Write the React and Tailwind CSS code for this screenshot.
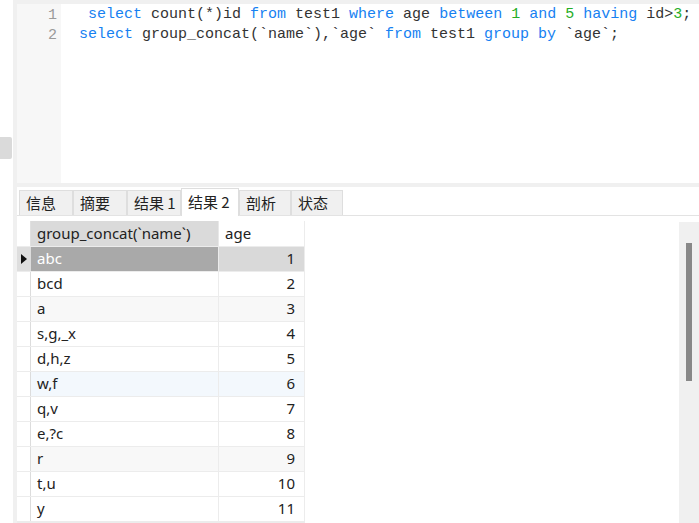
import React from 'react';

const KW = 'text-[#1681f2]';
const NUM = 'text-[#26ad26]';

const line1 = [
  [' ', ''], ['select', KW], [' count(*)id ', ''], ['from', KW], [' test1 ', ''], ['where', KW],
  [' age ', ''], ['between', KW], [' ', ''], ['1', NUM], [' ', ''], ['and', KW], [' ', ''],
  ['5', NUM], [' ', ''], ['having', KW], [' id>', ''], ['3', NUM], [';', ''],
];

const line2 = [
  ['select', KW], [' group_concat(`name`),`age` ', ''], ['from', KW], [' test1 ', ''],
  ['group by', KW], [' `age`;', ''],
];

const tabs = [
  { label: '信息', w: 'w-[54px]' },
  { label: '摘要', w: 'w-[54px]' },
  { label: '结果 1', w: 'w-[54px]' },
  { label: '结果 2', w: 'w-[58px]', active: true },
  { label: '剖析', w: 'w-[52px]' },
  { label: '状态', w: 'w-[52px]' },
];

const rows = [
  { name: 'abc', age: 1 },
  { name: 'bcd', age: 2 },
  { name: 'a', age: 3, bg: 'bg-[#f8f8f8]' },
  { name: 's,g,_x', age: 4 },
  { name: 'd,h,z', age: 5 },
  { name: 'w,f', age: 6, bg: 'bg-[#f3f8fd]' },
  { name: 'q,v', age: 7 },
  { name: 'e,?c', age: 8 },
  { name: 'r', age: 9, bg: 'bg-[#f8f8f8]' },
  { name: 't,u', age: 10 },
  { name: 'y', age: 11 },
];

const CodeLine = ({ parts }) => (
  <div className="h-[20px] leading-[20px] whitespace-pre">
    {parts.map(([t, c], i) => (
      <span key={i} className={c}>{t}</span>
    ))}
  </div>
);

export default function App() {
  return (
    <div className="w-[699px] h-[523px] flex overflow-hidden bg-white text-[#222]">
      {/* left strip */}
      <div className="w-[13px] shrink-0 bg-white">
        <div className="mt-[137px] h-[22px] w-[12px] bg-[#dadada] rounded-r-[2px]"></div>
      </div>
      <div className="w-[4px] shrink-0 bg-[#f0f0f0]"></div>

      <div className="flex-1 flex flex-col min-w-0">
        <div className="h-[4px] bg-[#f0f0f0]"></div>

        {/* editor */}
        <div className="h-[179px] flex pt-[1px] font-['Liberation_Mono',monospace] text-[15px]">
          <div className="w-[44px] -mt-[1px] pt-[1px] bg-[#f7f7f7] text-right pr-[4px] text-[#9a9a9a]">
            <div className="h-[20px] leading-[21px]">1</div>
            <div className="h-[20px] leading-[21px]">2</div>
          </div>
          <div className="flex-1 pl-[18px] text-[#333]">
            <CodeLine parts={line1} />
            <CodeLine parts={line2} />
          </div>
        </div>

        <div className="h-[4px] bg-[#f0f0f0]"></div>

        {/* tabs */}
        <div className="h-[29px] flex items-end pl-[2px] border-b border-[#e3e3e3] font-['Noto_Sans_CJK_SC','Noto_Sans',sans-serif] text-[15px] text-[#222]">
          {tabs.map((t) => (
            <div
              key={t.label}
              className={`${t.w} flex items-center pl-[6px] border border-b-0 border-[#dedede] ${
                t.active ? 'h-[28px] bg-white -mb-px' : 'h-[25px] bg-[#f0f0f0]'
              }`}
            >
              {t.label}
            </div>
          ))}
        </div>

        {/* grid */}
        <div className="flex-1 flex min-h-0">
          <div className="flex-1 pt-[5px] font-['Noto_Sans',sans-serif] text-[15px]">
            <div className="w-[288px]">
              <div className="flex h-[25px]">
                <div className="w-[14px] border-r border-[#e0e0e0]"></div>
                <div className="w-[188px] bg-[#dadada] pl-[6px] leading-[25px] border-r border-[#e8e8e8]">
                  group_concat(`name`)
                </div>
                <div className="w-[86px] bg-white pl-[6px] leading-[25px] border-r border-[#ececec]">age</div>
              </div>
              {rows.map((r, i) => {
                const sel = i === 0;
                return (
                  <div key={r.name} className={`flex h-[25px] border-t border-[#ececec] ${r.bg || ''}`}>
                    <div
                      className={`w-[14px] border-r border-[#dcdcdc] flex items-center pl-[4px] ${
                        sel ? 'bg-[#dedede]' : 'bg-white'
                      }`}
                    >
                      {sel && (
                        <svg width="6" height="10" viewBox="0 0 6 10">
                          <path d="M0 0 L6 5 L0 10 Z" fill="#111" />
                        </svg>
                      )}
                    </div>
                    <div
                      className={`w-[188px] pl-[6px] leading-[23px] border-r border-[#ececec] ${
                        sel ? 'bg-[#a9a9a9] text-white' : ''
                      }`}
                    >
                      {r.name}
                    </div>
                    <div
                      className={`w-[86px] pr-[9px] text-right leading-[23px] border-r border-[#ececec] ${
                        sel ? 'bg-[#d9d9d9]' : ''
                      }`}
                    >
                      {r.age}
                    </div>
                  </div>
                );
              })}
              <div className="h-[2px] bg-[#ececec]"></div>
            </div>
          </div>

          {/* scrollbar */}
          <div className="w-[20px] shrink-0 mt-[6px] bg-[#f0f0f0] flex justify-center">
            <div className="mt-[21px] w-[6px] h-[138px] bg-[#888888]"></div>
          </div>
        </div>
      </div>
    </div>
  );
}
